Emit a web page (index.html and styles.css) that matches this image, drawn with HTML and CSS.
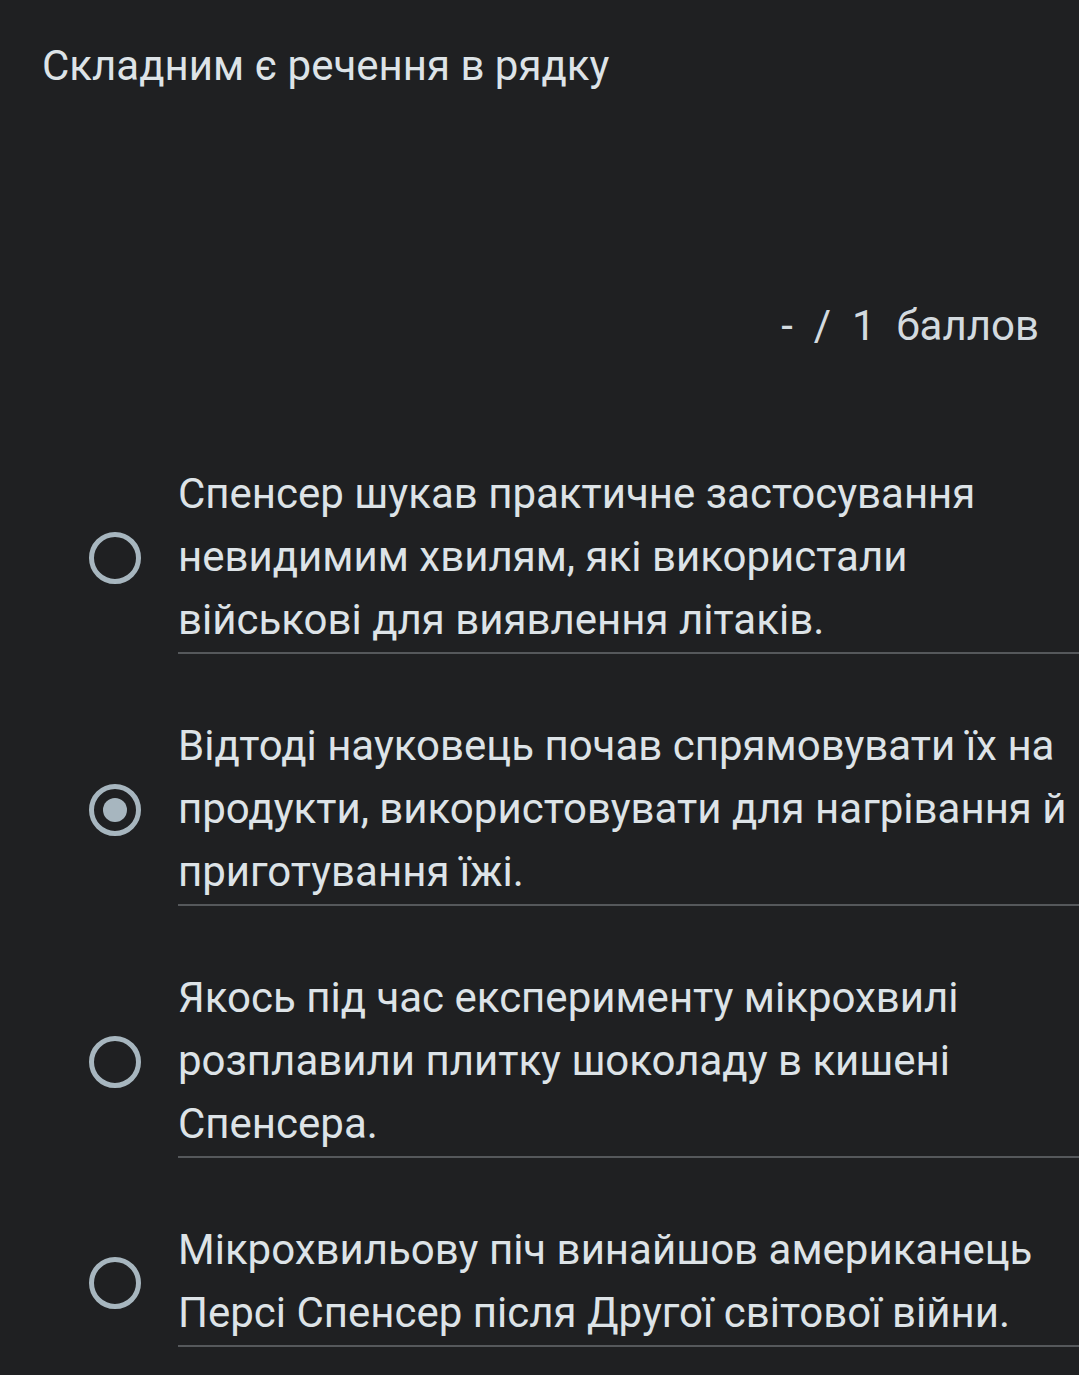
FILE: index.html
```html
<!DOCTYPE html>
<html lang="uk">
<head>
<meta charset="utf-8">
<title>Складним є речення в рядку</title>
<link rel="stylesheet" href="styles.css">
</head>
<body>
<main class="page">
  <h1 class="title">Складним є речення в рядку</h1>
  <div class="score">-&nbsp; /&nbsp; 1&nbsp; баллов</div>
  <div class="options">
    <label class="option">
      <span class="radio"></span>
      <span class="text">Спенсер шукав практичне застосування<br>невидимим хвилям, які використали<br>військові для виявлення літаків.</span>
    </label>
    <label class="option">
      <span class="radio checked"></span>
      <span class="text">Відтоді науковець почав спрямовувати їх на<br>продукти, використовувати для нагрівання й<br>приготування їжі.</span>
    </label>
    <label class="option">
      <span class="radio"></span>
      <span class="text">Якось під час експерименту мікрохвилі<br>розплавили плитку шоколаду в кишені<br>Спенсера.</span>
    </label>
    <label class="option">
      <span class="radio"></span>
      <span class="text">Мікрохвильову піч винайшов американець<br>Персі Спенсер після Другої світової війни.</span>
    </label>
  </div>
</main>
</body>
</html>
```

FILE: styles.css
```css
html, body {
  margin: 0;
  padding: 0;
  background: #1f2022;
}

.page {
  font-family: Roboto, "Noto Sans", sans-serif;
  color: #dde3e7;
  min-height: 1375px;
}

.title {
  margin: 0;
  padding: 43px 0 0 42px;
  font-size: 42px;
  font-weight: 400;
  line-height: 46px;
}

.score {
  margin-top: 214px;
  padding-right: 40px;
  text-align: right;
  font-size: 42px;
  line-height: 46px;
  color: #d3dadf;
}

.options {
  margin-top: 113px;
  display: flex;
  flex-direction: column;
  gap: 60px;
}

.option {
  display: flex;
  align-items: center;
  padding-left: 89px;
  gap: 37px;
}

.radio {
  flex: none;
  box-sizing: border-box;
  width: 52px;
  height: 52px;
  border: 5px solid #a7b6bf;
  border-radius: 50%;
  display: flex;
  align-items: center;
  justify-content: center;
}

.radio.checked::after {
  content: "";
  width: 24px;
  height: 24px;
  border-radius: 50%;
  background: #a7b6bf;
}

.text {
  flex: 1;
  font-size: 42px;
  line-height: 63px;
  padding-bottom: 1px;
  border-bottom: 2px solid #55585b;
  white-space: nowrap;
}
```
